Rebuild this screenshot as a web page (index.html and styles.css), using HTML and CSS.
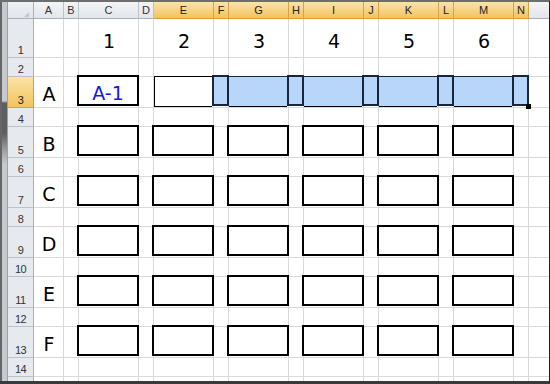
FILE: index.html
```html
<!DOCTYPE html>
<html lang="ja">
<head>
  <meta charset="UTF-8">
  <meta name="viewport" content="width=device-width, initial-scale=1.0">
  <title>Sheet1</title>
  <link rel="stylesheet" href="styles.css">
</head>
<body>
  <div class="sheet">
    <div class="frame-left"></div>

    <!-- column headers -->
    <div class="corner"><span class="corner-mark"></span></div>
    <div class="col-heads">
      <div class="ch first">A</div>
      <div class="ch narrow">B</div>
      <div class="ch wide">C</div>
      <div class="ch narrow">D</div>
      <div class="ch wide sel">E</div>
      <div class="ch narrow sel">F</div>
      <div class="ch wide sel">G</div>
      <div class="ch narrow sel">H</div>
      <div class="ch wide sel">I</div>
      <div class="ch narrow sel">J</div>
      <div class="ch wide sel">K</div>
      <div class="ch narrow sel">L</div>
      <div class="ch wide sel">M</div>
      <div class="ch narrow sel">N</div>
      <div class="ch rest"></div>
    </div>

    <!-- row headers -->
    <div class="row-heads">
      <div class="rh first">1</div>
      <div class="rh short">2</div>
      <div class="rh tall sel">3</div>
      <div class="rh short">4</div>
      <div class="rh tall">5</div>
      <div class="rh short">6</div>
      <div class="rh tall">7</div>
      <div class="rh short">8</div>
      <div class="rh tall">9</div>
      <div class="rh short">10</div>
      <div class="rh tall">11</div>
      <div class="rh short">12</div>
      <div class="rh tall">13</div>
      <div class="rh short">14</div>
      <div class="rh rest"></div>
    </div>

    <!-- cell area with gridlines -->
    <div class="cells"></div>

    <!-- row 1: column numbers -->
    <div class="num col-c row-1">1</div>
    <div class="num col-e row-1">2</div>
    <div class="num col-g row-1">3</div>
    <div class="num col-i row-1">4</div>
    <div class="num col-k row-1">5</div>
    <div class="num col-m row-1">6</div>

    <!-- column A: row letters -->
    <div class="letter col-a row-3">A</div>
    <div class="letter col-a row-5">B</div>
    <div class="letter col-a row-7">C</div>
    <div class="letter col-a row-9">D</div>
    <div class="letter col-a row-11">E</div>
    <div class="letter col-a row-13">F</div>

    <!-- row 3 -->
    <div class="box label col-c row-3">A-1</div>
    <div class="band">
      <div class="active"></div>
      <div class="cap"></div>
      <div class="gap"></div>
      <div class="cap"></div>
      <div class="gap"></div>
      <div class="cap"></div>
      <div class="gap"></div>
      <div class="cap"></div>
      <div class="gap"></div>
      <div class="cap end"><span class="handle"></span></div>
    </div>

    <!-- rows 5 - 13 -->
    <div class="box col-c row-5"></div>
    <div class="box col-e row-5"></div>
    <div class="box col-g row-5"></div>
    <div class="box col-i row-5"></div>
    <div class="box col-k row-5"></div>
    <div class="box col-m row-5"></div>

    <div class="box col-c row-7"></div>
    <div class="box col-e row-7"></div>
    <div class="box col-g row-7"></div>
    <div class="box col-i row-7"></div>
    <div class="box col-k row-7"></div>
    <div class="box col-m row-7"></div>

    <div class="box col-c row-9"></div>
    <div class="box col-e row-9"></div>
    <div class="box col-g row-9"></div>
    <div class="box col-i row-9"></div>
    <div class="box col-k row-9"></div>
    <div class="box col-m row-9"></div>

    <div class="box col-c row-11"></div>
    <div class="box col-e row-11"></div>
    <div class="box col-g row-11"></div>
    <div class="box col-i row-11"></div>
    <div class="box col-k row-11"></div>
    <div class="box col-m row-11"></div>

    <div class="box col-c row-13"></div>
    <div class="box col-e row-13"></div>
    <div class="box col-g row-13"></div>
    <div class="box col-i row-13"></div>
    <div class="box col-k row-13"></div>
    <div class="box col-m row-13"></div>
  </div>
</body>
</html>
```

FILE: styles.css
```css
* {
  box-sizing: border-box;
}

body {
  margin: 0;
  background: #fff;
}

/* Whole sheet window */
.sheet {
  width: 550px;
  height: 384px;
  border-top: 2px solid #6e6e6e;
  border-right: 1px solid #1e1e1e;
  border-bottom: 3px solid #3a3a3a;
  display: grid;
  grid-template-columns: 8px 26px 30px 15px repeat(6, 60px 15px) 1fr;
  grid-template-rows: 17px 39px 19px repeat(6, 31px 19px) 1fr;
  font-family: "DejaVu Sans", sans-serif;
  overflow: hidden;
}

/* Left window frame with splitter */
.frame-left {
  grid-column: 1;
  grid-row: 1 / -1;
  background:
    linear-gradient(to bottom, transparent 99px, #5e5e5e 101px, #5e5e5e 131px, #a9abae 152px, transparent 162px) 2px 0 / 5px 100% no-repeat,
    linear-gradient(to right, #666 0 2px, #c6c9cd 2px 7px, #9da1a6 7px 8px);
}

/* Header corner */
.corner {
  grid-column: 2;
  grid-row: 1;
  display: flex;
  justify-content: flex-end;
  align-items: flex-end;
  padding: 0 4px 1px 0;
  background: linear-gradient(#eef0f3, #e2e5ea);
  border-right: 1px solid #a9b0b8;
  border-bottom: 1px solid #a9b0b8;
}

.corner-mark {
  width: 0;
  height: 0;
  border-left: 5px solid transparent;
  border-bottom: 5px solid #c3c7cc;
}

/* Column headers */
.col-heads {
  grid-column: 3 / -1;
  grid-row: 1;
  display: flex;
}

.ch {
  flex: none;
  display: flex;
  align-items: center;
  justify-content: center;
  font-family: "Liberation Sans", sans-serif;
  font-size: 11px;
  color: #333;
  background: linear-gradient(#f3f4f6, #e2e6eb);
  border-right: 1px solid #bcc2c9;
  border-bottom: 1px solid #a9b0b8;
}

.ch.first { width: 30px; }
.ch.narrow { width: 15px; }
.ch.wide { width: 60px; }
.ch.rest { flex: 1; border-right: none; }

.ch.sel {
  background: linear-gradient(#fbe4a6, #f3c35f);
  border-right-color: #d5a24a;
  border-bottom-color: #dc9f35;
  color: #222;
}

/* Row headers */
.row-heads {
  grid-column: 2;
  grid-row: 2 / -1;
  display: flex;
  flex-direction: column;
}

.rh {
  flex: none;
  display: flex;
  align-items: flex-end;
  justify-content: center;
  padding-bottom: 1px;
  font-family: "Liberation Sans", sans-serif;
  font-size: 11px;
  line-height: 12px;
  letter-spacing: -0.5px;
  color: #333;
  background: #e6e9ed;
  border-right: 1px solid #a9b0b8;
  border-bottom: 1px solid #bcc2c9;
}

.rh.first { height: 39px; }
.rh.short { height: 19px; }
.rh.tall { height: 31px; }
.rh.rest { flex: 1; border-bottom: none; }

.rh.sel {
  background: linear-gradient(#fbe4a6, #f3c35f);
  border-right-color: #dc9f35;
  border-bottom-color: #d5a24a;
  color: #222;
}

/* Cell area, gridlines drawn as backgrounds */
.cells {
  grid-column: 3 / -1;
  grid-row: 2 / -1;
  background-color: #fff;
  background-image:
    repeating-linear-gradient(to right, transparent 0 29px, #d9d9d9 29px 30px, transparent 30px 44px, #d9d9d9 44px 45px, transparent 45px 75px),
    linear-gradient(to bottom, transparent 38px, #d9d9d9 38px 39px, transparent 39px),
    repeating-linear-gradient(to bottom, transparent 0 18px, #d9d9d9 18px 19px, transparent 19px 49px, #d9d9d9 49px 50px);
  background-position: 0 0, 0 0, 0 39px;
  background-repeat: no-repeat;
}

/* Placement */
.col-a { grid-column: 3; }
.col-c { grid-column: 5; }
.col-e { grid-column: 7; }
.col-g { grid-column: 9; }
.col-i { grid-column: 11; }
.col-k { grid-column: 13; }
.col-m { grid-column: 15; }

.row-1 { grid-row: 2; }
.row-3 { grid-row: 4; }
.row-5 { grid-row: 6; }
.row-7 { grid-row: 8; }
.row-9 { grid-row: 10; }
.row-11 { grid-row: 12; }
.row-13 { grid-row: 14; }

/* Cell contents */
.num,
.letter {
  display: flex;
  align-items: center;
  justify-content: center;
  font-size: 19px;
  line-height: 22px;
  color: #000;
}

.num { padding-top: 4px; }
.letter { padding-top: 2px; }

.box {
  align-self: start;
  justify-self: start;
  width: 62px;
  height: 31px;
  margin: -2px 0 0 -2px;
  border: 2px solid #000;
}

.box.label {
  display: flex;
  align-items: center;
  justify-content: center;
  padding-top: 5px;
  font-size: 19px;
  line-height: 22px;
  color: #1616e2;
}

/* Selected range E3:N3 */
.band {
  grid-column: 7 / 17;
  grid-row: 4;
  align-self: start;
  justify-self: start;
  width: 377px;
  height: 32px;
  margin: -2px 0 0 -2px;
  display: flex;
  align-items: flex-start;
}

.band .active {
  width: 58px;
  height: 31px;
  margin: 1px 0 0 2px;
  background: #fff;
  border: 1px solid #000;
  border-right: none;
}

.band .cap {
  width: 17px;
  height: 31px;
  background: #b8d6fa;
  border: 2px solid #17263a;
}

.band .gap {
  width: 58px;
  height: 31px;
  margin-top: 1px;
  background: #b8d6fa;
  border-top: 1px solid #17263a;
  border-bottom: 1px solid #000;
}

.band .end {
  position: relative;
}

.handle {
  position: absolute;
  right: -4px;
  bottom: -5px;
  width: 5px;
  height: 5px;
  background: #000;
}
```
